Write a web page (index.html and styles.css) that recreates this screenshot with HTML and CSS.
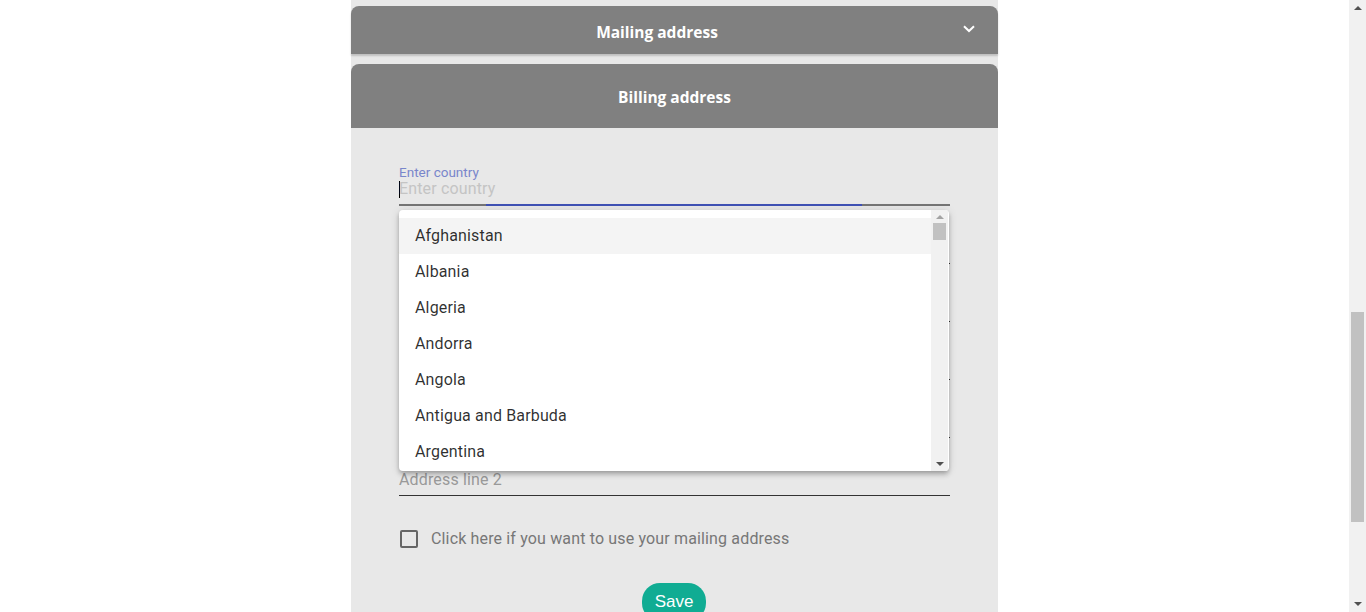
FILE: index.html
```html
<!DOCTYPE html>
<html>
<head>
<meta charset="utf-8">
<link rel="stylesheet" href="styles.css">
</head>
<body>
<div class="window">
  <main class="page">
    <section class="panel">
      <div class="accordion">
        <div class="acc-header acc-mailing">
          <span class="acc-title">Mailing address</span>
          <svg class="chevron" width="12" height="8" viewBox="0 0 12 8"><path d="M1 1.2 L6 6 L11 1.2" fill="none" stroke="#fff" stroke-width="2"/></svg>
        </div>
        <div class="acc-header acc-billing">
          <span class="acc-title">Billing address</span>
        </div>
        <div class="acc-body">
          <div class="fields">
            <div class="field field-focus">
              <label class="field-label">Enter country</label>
              <div class="field-input"><span class="caret"></span><span class="ph-light">Enter country</span></div>
              <div class="ink"></div>
            </div>
            <div class="field"><div class="field-input"><span class="ph">Address line 1</span></div></div>
            <div class="field"><div class="field-input"><span class="ph">City</span></div></div>
            <div class="field"><div class="field-input"><span class="ph">State</span></div></div>
            <div class="field"><div class="field-input"><span class="ph">Zip code</span></div></div>
            <div class="field"><div class="field-input"><span class="ph">Address line 2</span></div></div>

            <div class="dropdown">
              <ul class="options">
                <li class="opt active">Afghanistan</li>
                <li class="opt">Albania</li>
                <li class="opt">Algeria</li>
                <li class="opt">Andorra</li>
                <li class="opt">Angola</li>
                <li class="opt">Antigua and Barbuda</li>
                <li class="opt">Argentina</li>
              </ul>
              <div class="mini-scroll">
                <span class="tri tri-up light"></span>
                <span class="mini-thumb"></span>
                <span class="mini-space"></span>
                <span class="tri tri-down"></span>
              </div>
            </div>
          </div>

          <label class="check-row">
            <span class="checkbox"></span>
            <span class="check-text">Click here if you want to use your mailing address</span>
          </label>

          <div class="actions">
            <button class="save">Save</button>
          </div>
        </div>
      </div>
    </section>
  </main>
  <div class="scrollbar">
    <span class="tri tri-up"></span>
    <span class="sb-space-top"></span>
    <span class="sb-thumb"></span>
    <span class="sb-space"></span>
    <span class="tri tri-down"></span>
  </div>
</div>
</body>
</html>
```

FILE: styles.css
```css
* { box-sizing: border-box; }
html, body { margin: 0; padding: 0; height: 100%; overflow: hidden; background: #fff; }
body { font-family: Roboto, "Liberation Sans", sans-serif; letter-spacing: 0.15px; }

.window { display: flex; height: 612px; }
.page { flex: 1; display: flex; justify-content: center; }

.panel {
  width: 647px;
  background: #e8e8e8;
  padding-top: 6px;
  min-height: 700px;
}

.acc-header {
  background: #808080;
  color: #fff;
  display: flex;
  align-items: center;
  border-radius: 8px 8px 0 0;
  font-family: "Open Sans", "Liberation Sans", sans-serif;
  font-weight: 700;
  font-size: 15.5px;
  letter-spacing: 0;
  box-shadow: 0 2px 2px rgba(0,0,0,0.18);
}
.acc-title { flex: 1; text-align: center; }
.acc-mailing { height: 48px; padding-right: 23px; }
.acc-mailing .acc-title { margin-top: 3px; }
.chevron { display: block; margin-top: -2px; }
.acc-billing { height: 64px; margin-top: 10px; box-shadow: none; }
.acc-billing .acc-title { margin-top: 2px; }

.acc-body { padding: 20px 48px 0; }

.fields { position: relative; width: 551px; }
.field {
  height: 58px;
  display: flex;
  flex-direction: column;
  justify-content: flex-end;
  position: relative;
}
.field-label {
  font-size: 13.5px;
  line-height: 14px;
  height: 14px;
  color: #7986cb;
  letter-spacing: 0;
}
.field-input {
  height: 26px;
  padding-bottom: 5px;
  font-size: 16px;
  line-height: 20px;
  border-bottom: 1px solid #333;
  display: flex;
  align-items: center;
}
.field-focus .field-input { border-bottom: 2px solid #757575; height: 27px; }
.ink {
  position: absolute;
  left: 87px;
  width: 376px;
  bottom: 0;
  height: 2px;
  background: #3f51b5;
}
.caret { width: 1px; height: 17px; background: #000; margin-right: -1px; }
.ph-light { color: #c4c4c4; }
.ph { color: #999; }

.dropdown {
  position: absolute;
  top: 62px;
  left: 0;
  width: 550px;
  height: 261px;
  background: #fff;
  border-radius: 4px;
  box-shadow: 0 2px 4px -1px rgba(0,0,0,.2), 0 4px 5px 0 rgba(0,0,0,.14), 0 1px 10px 0 rgba(0,0,0,.12);
  display: flex;
  overflow: hidden;
}
.options {
  list-style: none;
  margin: 0;
  padding: 8px 0 0;
  flex: 1;
}
.opt {
  height: 36px;
  line-height: 36px;
  padding-left: 16px;
  font-size: 16px;
  color: rgba(0,0,0,.82);
}
.opt.active { background: #f4f4f4; }

.mini-scroll {
  width: 17px;
  background: #f1f1f1;
  display: flex;
  flex-direction: column;
  align-items: center;
  padding: 5px 0 5px;
  margin-right: 1px;
}
.mini-thumb { width: 13px; height: 17px; background: #c1c1c1; margin-top: 4px; }
.mini-space { flex: 1; }

.tri { width: 0; height: 0; border-left: 4px solid transparent; border-right: 4px solid transparent; }
.tri-up { border-bottom: 4px solid #505050; }
.tri-up.light { border-bottom-color: #a3a3a3; }
.tri-down { border-top: 4px solid #505050; }

.check-row {
  display: flex;
  align-items: center;
  gap: 13px;
  margin-top: 34px;
  height: 18px;
  padding-left: 1px;
}
.checkbox {
  width: 18px;
  height: 18px;
  border: 2px solid #666;
  border-radius: 2px;
}
.check-text { font-size: 16px; color: #777; margin-top: -2px; }

.actions { display: flex; justify-content: center; margin-top: 35px; }
.save {
  font-family: "Liberation Sans", Arial, sans-serif;
  background: #10ac93;
  color: #fff;
  border: none;
  border-radius: 18px;
  height: 38px;
  width: 64px;
  font-size: 17px;
  padding: 0 0 0;
  margin-right: 1px;
}

.scrollbar {
  width: 17px;
  background: #f1f1f1;
  display: flex;
  flex-direction: column;
  align-items: center;
  padding: 6px 0 6px;
}
.sb-space-top { height: 302px; }
.sb-thumb { width: 13px; height: 210px; background: #c1c1c1; }
.sb-space { flex: 1; }
```
